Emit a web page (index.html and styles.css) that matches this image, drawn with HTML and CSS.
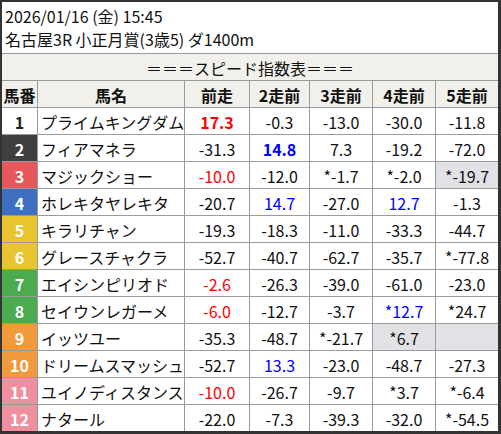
FILE: index.html
```html
<!DOCTYPE html>
<html lang="ja">
<head>
<meta charset="utf-8">
<link rel="stylesheet" href="styles.css">
</head>
<body>
<div class="frame">
  <div class="info">
    <div class="line">2026/01/16 (金) 15:45</div>
    <div class="line">名古屋3R 小正月賞(3歳5) ダ1400m</div>
  </div>
  <div class="sheet">
    <div class="title">＝＝＝スピード指数表＝＝＝</div>
    <div class="hd">馬番</div><div class="hd">馬名</div><div class="hd">前走</div><div class="hd">2走前</div><div class="hd">3走前</div><div class="hd">4走前</div><div class="hd">5走前</div>

    <div class="no w1">1</div><div class="nm">プライムキングダム</div><div class="v red b">17.3</div><div class="v">-0.3</div><div class="v">-13.0</div><div class="v">-30.0</div><div class="v">-11.8</div>
    <div class="no w2">2</div><div class="nm">フィアマネラ</div><div class="v">-31.3</div><div class="v blue b">14.8</div><div class="v">7.3</div><div class="v">-19.2</div><div class="v">-72.0</div>
    <div class="no w3">3</div><div class="nm">マジックショー</div><div class="v red">-10.0</div><div class="v">-12.0</div><div class="v">*-1.7</div><div class="v">*-2.0</div><div class="v gray">*-19.7</div>
    <div class="no w4">4</div><div class="nm">ホレキタヤレキタ</div><div class="v">-20.7</div><div class="v blue">14.7</div><div class="v">-27.0</div><div class="v blue">12.7</div><div class="v">-1.3</div>
    <div class="no w5">5</div><div class="nm">キラリチャン</div><div class="v">-19.3</div><div class="v">-18.3</div><div class="v">-11.0</div><div class="v">-33.3</div><div class="v">-44.7</div>
    <div class="no w5">6</div><div class="nm">グレースチャクラ</div><div class="v">-52.7</div><div class="v">-40.7</div><div class="v">-62.7</div><div class="v">-35.7</div><div class="v">*-77.8</div>
    <div class="no w7">7</div><div class="nm">エイシンピリオド</div><div class="v red">-2.6</div><div class="v">-26.3</div><div class="v">-39.0</div><div class="v">-61.0</div><div class="v">-23.0</div>
    <div class="no w7">8</div><div class="nm">セイウンレガーメ</div><div class="v red">-6.0</div><div class="v">-12.7</div><div class="v">-3.7</div><div class="v blue">*12.7</div><div class="v">*24.7</div>
    <div class="no w9">9</div><div class="nm">イッツユー</div><div class="v">-35.3</div><div class="v">-48.7</div><div class="v">*-21.7</div><div class="v gray">*6.7</div><div class="v gray"></div>
    <div class="no w9">10</div><div class="nm">ドリームスマッシュ</div><div class="v">-52.7</div><div class="v blue">13.3</div><div class="v">-23.0</div><div class="v">-48.7</div><div class="v">-27.3</div>
    <div class="no w11">11</div><div class="nm">ユイノディスタンス</div><div class="v red">-10.0</div><div class="v">-26.7</div><div class="v">-9.7</div><div class="v">*3.7</div><div class="v">*-6.4</div>
    <div class="no w11">12</div><div class="nm">ナタール</div><div class="v">-22.0</div><div class="v">-7.3</div><div class="v">-39.3</div><div class="v">-32.0</div><div class="v">*-54.5</div>
  </div>
</div>
</body>
</html>
```
FILE: styles.css
```css
html, body {
  margin: 0;
  padding: 0;
  background: #ffffff;
}
body {
  font-family: "Noto Sans CJK JP", "Noto Sans", sans-serif;
  color: #111;
}
.frame {
  width: 501px;
  height: 434px;
  box-sizing: border-box;
  border-style: solid;
  border-color: #333;
  border-width: 2px 3px 3px 2px;
  background: #fff;
}
.info {
  height: 51px;
  box-sizing: border-box;
  padding: 3px 0 0 3px;
  font-size: 16px;
  line-height: 23px;
  white-space: nowrap;
}
.sheet {
  display: grid;
  grid-template-columns: 35px 146px 64px 59px 62px 62px 62px;
  grid-auto-rows: 26px;
  gap: 1px;
  border-top: 1px solid #9a9a9a;
  background: #9a9a9a;
  font-size: 16px;
}
.sheet > div {
  display: flex;
  align-items: center;
  justify-content: center;
  background: #fff;
  white-space: nowrap;
  padding-top: 1px;
  box-sizing: border-box;
}
.sheet > .title {
  grid-column: 1 / -1;
  background: #f2f0eb;
}
.sheet > .hd {
  background: #f2f0eb;
  font-weight: bold;
}
.sheet > .nm {
  justify-content: flex-start;
  padding-left: 3px;
}
.sheet > .no {
  font-weight: bold;
  color: #fff;
}
.sheet > .w1 { background: #fff; color: #222; }
.sheet > .w2 { background: #3f3f3f; }
.sheet > .w3 { background: #e8585b; }
.sheet > .w4 { background: #3f6fc2; }
.sheet > .w5 { background: #e8c431; }
.sheet > .w7 { background: #4bab4f; }
.sheet > .w9 { background: #f09a3c; }
.sheet > .w11 { background: #f0909f; }
.sheet > .gray { background: #e1e1e6; }
.red { color: #ff0000; }
.blue { color: #0000ff; }
.b { font-weight: bold; }
```
